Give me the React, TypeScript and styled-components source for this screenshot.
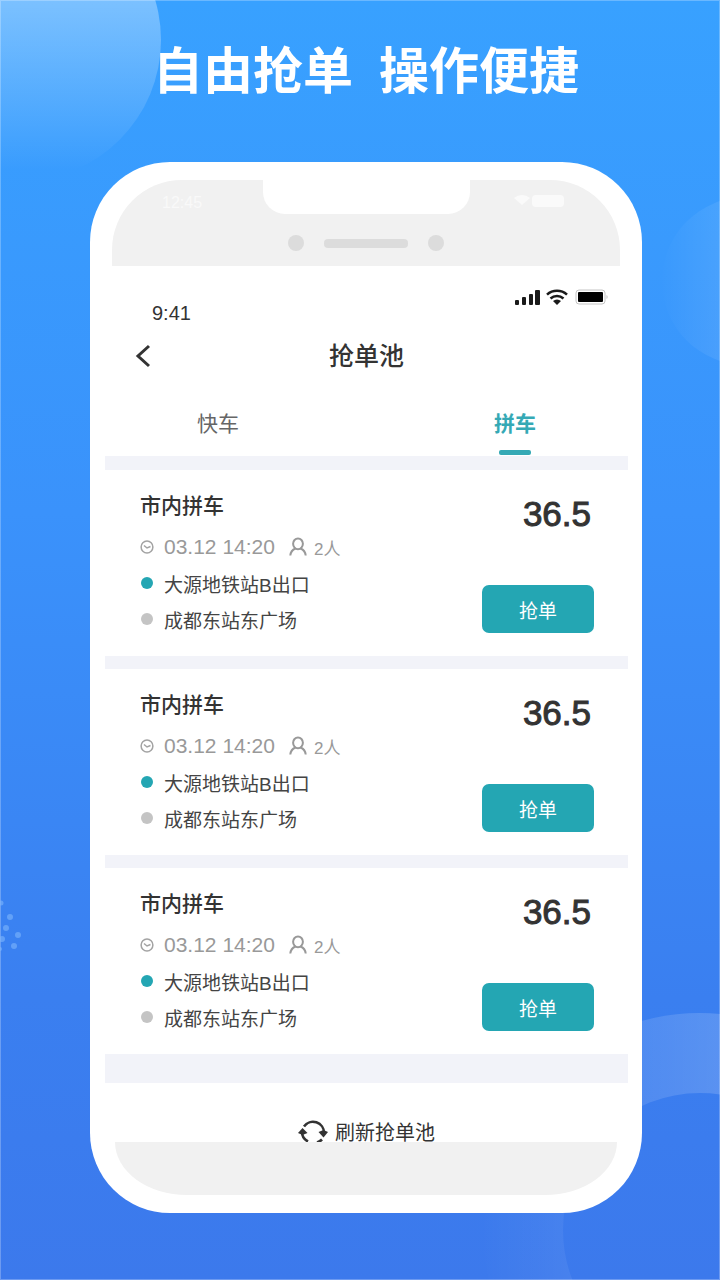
import { FunctionComponent } from "react";
import styled, { createGlobalStyle } from "styled-components";

const GlobalStyle = createGlobalStyle`
  * {
    box-sizing: border-box;
  }
  body {
    margin: 0;
    font-family: "Liberation Sans", "Noto Sans CJK SC", sans-serif;
    color: #333333;
  }
  button {
    font-family: inherit;
    border: none;
    padding: 0;
    background: none;
    cursor: pointer;
  }
`;

const Page = styled.main`
  position: relative;
  min-height: 100vh;
  padding: 35px 78px 67px 90px;
  overflow: hidden;
  background: linear-gradient(180deg, #38a1ff 0%, #3a92fb 40%, #3a7ff0 78%, #3c79ec 100%);
  box-shadow: inset 0 0 0 1px rgba(255, 255, 255, 0.25);
`;

const Bubble = styled.svg<{ $side: "left" | "right"; $top?: number }>`
  position: absolute;
  left: ${(props) => (props.$side === "left" ? 0 : "auto")};
  right: ${(props) => (props.$side === "right" ? 0 : "auto")};
  top: ${(props) => (props.$top === undefined ? "auto" : `${props.$top}px`)};
  bottom: ${(props) => (props.$top === undefined ? 0 : "auto")};
`;

const Headline = styled.h1`
  position: relative;
  display: flex;
  justify-content: center;
  gap: 26px;
  margin: 0 0 53px;
  font-size: 50px;
  line-height: 74px;
  font-weight: 700;
  color: #ffffff;
`;

const Phone = styled.div`
  position: relative;
  padding: 18px 14px 18px 15px;
  border-radius: 80px;
  background: #ffffff;
`;

const TopBezel = styled.div`
  display: grid;
  grid-template-columns: 1fr 207px 1fr;
  grid-template-rows: 34px 1fr;
  height: 86px;
  margin: 0 8px 0 7px;
  border-radius: 70px 70px 0 0;
  background: #f1f1f1;
`;

const GhostTime = styled.span`
  padding: 12px 0 0 50px;
  font-size: 16px;
  line-height: 22px;
  color: #f9f9f9;
`;

const Notch = styled.div`
  border-radius: 0 0 22px 22px;
  background: #ffffff;
`;

const GhostIcons = styled.svg`
  margin: 14px 0 0 44px;
`;

const Speaker = styled.div`
  grid-column: 1 / -1;
  display: flex;
  justify-content: center;
  align-items: center;
  gap: 20px;
  margin-top: 6px;
`;

const Lens = styled.span`
  width: 16px;
  height: 16px;
  border-radius: 50%;
  background: #dcdcdc;
`;

const Slot = styled.span`
  width: 84px;
  height: 9px;
  border-radius: 4px;
  background: #dcdcdc;
`;

const BottomBezel = styled.div`
  height: 53px;
  margin: 0 11px 0 10px;
  border-radius: 0 0 72px 72px / 0 0 53px 53px;
  background: #f1f1f1;
`;

const Screen = styled.div`
  display: flex;
  flex-direction: column;
  background: #ffffff;
`;

const StatusBar = styled.div`
  display: flex;
  justify-content: space-between;
  height: 59px;
  padding: 23px 20px 0 47px;
`;

const Time = styled.span`
  align-self: flex-end;
  font-size: 20px;
  line-height: 24px;
`;

const Nav = styled.header`
  display: grid;
  grid-template-columns: 48px 1fr 48px;
  align-items: center;
  height: 62px;
  padding: 0 14px;
`;

const BackButton = styled.button`
  display: flex;
  justify-content: center;
  align-items: center;
  height: 48px;
`;

const NavTitle = styled.h2`
  margin: 0;
  font-size: 25px;
  line-height: 36px;
  font-weight: 500;
  text-align: center;
`;

const Tabs = styled.nav`
  display: flex;
  justify-content: space-between;
  height: 69px;
  padding: 0 92px;
`;

const Tab = styled.button<{ $active?: boolean }>`
  display: flex;
  flex-direction: column;
  justify-content: space-between;
  align-items: center;
  padding: 23px 0 1px;
  font-size: 21px;
  line-height: 28px;
  font-weight: ${(props) => (props.$active ? 700 : 400)};
  color: ${(props) => (props.$active ? "#35a9b5" : "#666666")};

  &::after {
    content: "";
    width: 32px;
    height: 5px;
    border-radius: 2px;
    background: ${(props) => (props.$active ? "#35a9b5" : "transparent")};
  }
`;

const OrderList = styled.ul`
  display: flex;
  flex-direction: column;
  gap: 13px;
  margin: 0;
  padding: 14px 0 29px;
  list-style: none;
  background: #f2f3f9;
`;

const Card = styled.li`
  display: flex;
  justify-content: space-between;
  padding: 22px 34px 19px 35px;
  background: #ffffff;
`;

const CardTitle = styled.h3`
  margin: 0 0 9px;
  font-size: 21px;
  line-height: 28px;
  font-weight: 500;
`;

const Line = styled.div<{ $muted?: boolean }>`
  display: flex;
  align-items: center;
  gap: 10px;
  height: 36px;
  font-size: ${(props) => (props.$muted ? 21 : 19)}px;
  color: ${(props) => (props.$muted ? "#999999" : "#444444")};
`;

const Seats = styled.span`
  display: flex;
  align-items: center;
  gap: 7px;
  margin-left: 4px;
  font-size: 17px;
`;

const Marker = styled.span<{ $start?: boolean }>`
  width: 12px;
  height: 12px;
  margin: 0 1px;
  border-radius: 50%;
  background: ${(props) => (props.$start ? "#24a6b3" : "#c4c4c4")};
`;

const CardSide = styled.div`
  display: flex;
  flex-direction: column;
  justify-content: space-between;
  align-items: flex-end;
  padding: 2px 0 4px;
`;

const Price = styled.span`
  padding-right: 3px;
  font-size: 35px;
  line-height: 40px;
  -webkit-text-stroke: 1px #333333;
`;

const GrabButton = styled.button`
  width: 112px;
  height: 48px;
  border-radius: 7px;
  background: #24a6b3;
  font-size: 19px;
  color: #ffffff;
`;

const RefreshButton = styled.button`
  display: flex;
  justify-content: center;
  align-items: flex-start;
  gap: 7px;
  height: 59px;
  padding-top: 36px;
  font-size: 20px;
  line-height: 28px;
  color: #333333;
`;

const StatusIcons: FunctionComponent = () => (
  <svg width="93" height="16" viewBox="0 0 93 16" aria-hidden="true">
    <g fill="#1a1a1a">
      <rect x="0" y="11" width="4" height="5" rx="1" />
      <rect x="7" y="8" width="4" height="8" rx="1" />
      <rect x="14" y="5" width="4" height="11" rx="1" />
      <rect x="20" y="1" width="5" height="15" rx="1" />
    </g>
    <g fill="none" stroke="#1a1a1a" strokeWidth="2.6">
      <path d="M32 5.600a15 15 0 0 1 20 0" />
      <path d="M35.500 9.400a10 10 0 0 1 13 0" />
    </g>
    <path d="M38 12a6 6 0 0 1 8 0l-4 4z" fill="#1a1a1a" />
    <rect x="61" y="1" width="29" height="14" rx="3" fill="none" stroke="#c4c4c4" />
    <rect x="63" y="3" width="25" height="10" rx="1" fill="#000000" />
    <path d="M91.500 6v4c1.500-.5 1.500-3.500 0-4z" fill="#c4c4c4" />
  </svg>
);

const ClockIcon: FunctionComponent = () => (
  <svg width="14" height="14" viewBox="0 0 14 14" fill="none" stroke="#a3a3a3" strokeWidth="1.5" aria-hidden="true">
    <circle cx="7" cy="7" r="5.900" />
    <path d="M4 5.500l3 2.500 3.500-1.500" />
  </svg>
);

const PersonIcon: FunctionComponent = () => (
  <svg width="18" height="20" viewBox="0 0 18 20" fill="none" stroke="#999999" strokeWidth="2" aria-hidden="true">
    <ellipse cx="9" cy="6.800" rx="4.900" ry="5.400" />
    <path d="M6.500 11.500C3.500 12.800 1.600 15 1.300 18.500M11.500 11.500c3 1.300 4.900 3.500 5.200 7" />
  </svg>
);

const RefreshIcon: FunctionComponent = () => (
  <svg width="30" height="23" viewBox="0 0 30 23" aria-hidden="true">
    <g fill="none" stroke="#333333" strokeWidth="2.6">
      <path d="M6 7.500A11 11 0 0 1 26 14" />
      <path d="M4 13a11 11 0 0 0 6 9.500" />
      <path d="M19 23.500a11 11 0 0 0 5-3" />
    </g>
    <path d="M0 14l4.500-5 5 5-5 2z" fill="#333333" />
    <path d="M20.500 13l5-2 4.500 2-4.500 5.500z" fill="#333333" />
  </svg>
);

const orders = [1, 2, 3].map((id) => ({
  id,
  title: "市内拼车",
  time: "03.12 14:20",
  seats: "2人",
  from: "大源地铁站B出口",
  to: "成都东站东广场",
  price: "36.5",
}));

const OrderCard: FunctionComponent<{ order: (typeof orders)[number] }> = ({ order }) => {
  return (
    <Card>
      <div>
        <CardTitle>{order.title}</CardTitle>
        <Line $muted>
          <ClockIcon />
          <span>{order.time}</span>
          <Seats>
            <PersonIcon />
            {order.seats}
          </Seats>
        </Line>
        <Line>
          <Marker $start />
          {order.from}
        </Line>
        <Line>
          <Marker />
          {order.to}
        </Line>
      </div>
      <CardSide>
        <Price>{order.price}</Price>
        <GrabButton>抢单</GrabButton>
      </CardSide>
    </Card>
  );
};

const Backdrop: FunctionComponent = () => (
  <>
    <Bubble $side="left" $top={0} width="162" height="182" aria-hidden="true">
      <defs>
        <linearGradient id="glow" x1="0" y1="0" x2="0" y2="170" gradientUnits="userSpaceOnUse">
          <stop offset="0" stopColor="#ffffff" stopOpacity="0.34" />
          <stop offset="1" stopColor="#ffffff" stopOpacity="0" />
        </linearGradient>
      </defs>
      <circle cx="20" cy="40" r="141" fill="url(#glow)" />
    </Bubble>
    <Bubble $side="right" $top={196} width="60" height="170" aria-hidden="true">
      <defs>
        <linearGradient id="side" x1="0" y1="0" x2="60" y2="0" gradientUnits="userSpaceOnUse">
          <stop offset="0" stopColor="#ffffff" stopOpacity="0" />
          <stop offset="1" stopColor="#ffffff" stopOpacity="0.08" />
        </linearGradient>
      </defs>
      <circle cx="86" cy="85" r="84" fill="url(#side)" />
    </Bubble>
    <Bubble $side="left" $top={896} width="24" height="60" fill="#7db5fb" fillOpacity="0.6" aria-hidden="true">
      <circle cx="1" cy="7" r="2.500" />
      <circle cx="10" cy="21" r="3" />
      <circle cx="6" cy="32" r="3" />
      <circle cx="18" cy="39" r="3" />
      <circle cx="2" cy="43" r="3" />
      <circle cx="14" cy="50" r="3" />
      <circle cx="0" cy="53" r="2" />
    </Bubble>
    <Bubble $side="right" width="240" height="270" aria-hidden="true">
      <defs>
        <linearGradient id="ring" x1="0" y1="0" x2="240" y2="0" gradientUnits="userSpaceOnUse">
          <stop offset="0" stopColor="#ffffff" stopOpacity="0" />
          <stop offset="1" stopColor="#ffffff" stopOpacity="0.16" />
        </linearGradient>
      </defs>
      <circle cx="220" cy="220" r="177" fill="none" stroke="url(#ring)" strokeWidth="80" />
    </Bubble>
  </>
);

const App: FunctionComponent = () => {
  return (
    <Page>
      <GlobalStyle />
      <Backdrop />
      <Headline>
        <span>自由抢单</span>
        <span>操作便捷</span>
      </Headline>
      <Phone>
        <TopBezel>
          <GhostTime>12:45</GhostTime>
          <Notch />
          <GhostIcons width="50" height="14" viewBox="0 0 50 14" fill="#fafafa" aria-hidden="true">
            <path d="M0 4a12 12 0 0 1 16 0l-8 7z" />
            <rect x="18" y="1" width="32" height="12" rx="4" />
          </GhostIcons>
          <Speaker>
            <Lens />
            <Slot />
            <Lens />
          </Speaker>
        </TopBezel>
        <Screen>
          <StatusBar>
            <Time>9:41</Time>
            <StatusIcons />
          </StatusBar>
          <Nav>
            <BackButton aria-label="返回">
              <svg width="16" height="24" viewBox="0 0 16 24" fill="none" stroke="#333333" strokeWidth="3">
                <path d="M14 2L3 12l11 10" />
              </svg>
            </BackButton>
            <NavTitle>抢单池</NavTitle>
          </Nav>
          <Tabs>
            <Tab>快车</Tab>
            <Tab $active>拼车</Tab>
          </Tabs>
          <OrderList>
            {orders.map((order) => (
              <OrderCard key={order.id} order={order} />
            ))}
          </OrderList>
          <RefreshButton>
            <RefreshIcon />
            刷新抢单池
          </RefreshButton>
        </Screen>
        <BottomBezel />
      </Phone>
    </Page>
  );
};

export default App;
